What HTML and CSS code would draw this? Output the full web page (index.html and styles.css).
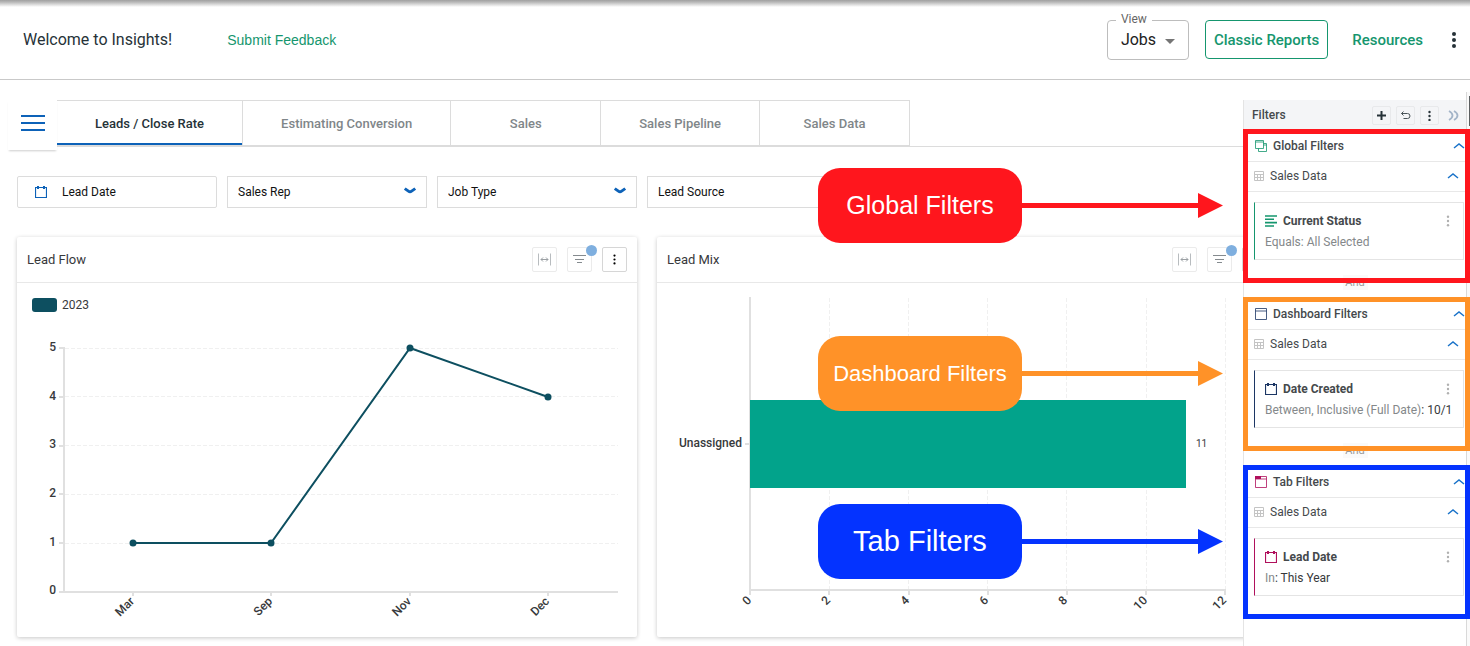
FILE: index.html
```html
<!DOCTYPE html>
<html lang="en">
    <head>
        <meta charset="UTF-8">
        <title>Insights</title>
        <link rel="stylesheet" href="styles.css">
    </head>
    <body>
        <!-- shared icons -->
        <svg class="sprite" aria-hidden="true">
            <symbol id="dots" viewBox="0 0 4 14">
                <circle cx="2" cy="2" r="1.4"/><circle cx="2" cy="7" r="1.4"/><circle cx="2" cy="12" r="1.4"/>
            </symbol>
            <symbol id="chevron" viewBox="0 0 12 8">
                <path d="M.8 1.500l3.600 2.700q1.600 1.200 3.200 0l3.600-2.700" fill="none" stroke="currentColor" stroke-width="2.800"/>
            </symbol>
            <symbol id="up" viewBox="0 0 12 8">
                <path d="M1 6l5-4 5 4" fill="none" stroke="currentColor" stroke-width="1.5"/>
            </symbol>
            <symbol id="calendar" viewBox="0 0 12 12">
                <path d="M.5 1.500h11v10H.5z" fill="none" stroke="currentColor" stroke-width="1.200"/>
                <path d="M2 0h2v3H2zM8 0h2v3H8z" fill="currentColor"/>
            </symbol>
            <symbol id="table" viewBox="0 0 10 10">
                <path d="M.5 .5h9v9h-9zM.5 3.500h9M.5 6.500h9M3.500 3.500v6M6.500 3.500v6" fill="none" stroke="currentColor"/>
            </symbol>
            <symbol id="resize" viewBox="0 0 13 13">
                <path d="M.5 .5v12M12.500 .5v12" stroke="#b8bcbf" fill="none"/>
                <path d="M3 6.500h7M5 4.500l-2 2 2 2M8 4.500l2 2-2 2" stroke="#9a9fa3" fill="none"/>
            </symbol>
            <symbol id="funnel" viewBox="0 0 13 13">
                <path d="M0 2.500h13M2 6.500h9M4 9.500h5" stroke="#858b8f" fill="none"/>
            </symbol>
        </svg>

        <header class="topbar">
            <h1 class="welcome">Welcome to Insights!</h1>
            <a class="feedback" href="#">Submit Feedback</a>
            <div class="view-field">
                <label for="view">View</label>
                <select id="view"><option>Jobs</option></select>
                <svg class="caret" viewBox="0 0 10 5"><path d="M0 0h10l-5 5z"/></svg>
            </div>
            <button class="btn-outline">Classic Reports</button>
            <a class="resources" href="#">Resources</a>
            <button class="more" aria-label="More"><svg viewBox="0 0 4 16"><circle cx="2" cy="2" r="2"/><circle cx="2" cy="8" r="2"/><circle cx="2" cy="14" r="2"/></svg></button>
        </header>

        <div class="layout">
            <main class="dashboard">
                <nav class="tabs">
                    <button class="menu" aria-label="Menu"><span></span><span></span><span></span></button>
                    <a class="tab selected" href="#">Leads / Close Rate</a>
                    <a class="tab" href="#">Estimating Conversion</a>
                    <a class="tab" href="#">Sales</a>
                    <a class="tab" href="#">Sales Pipeline</a>
                    <a class="tab" href="#">Sales Data</a>
                </nav>

                <div class="controls">
                    <button class="control date"><svg><use href="#calendar"/></svg>Lead Date</button>
                    <div class="control">
                        <select aria-label="Sales Rep"><option>Sales Rep</option></select>
                        <svg><use href="#chevron"/></svg>
                    </div>
                    <div class="control">
                        <select aria-label="Job Type"><option>Job Type</option></select>
                        <svg><use href="#chevron"/></svg>
                    </div>
                    <div class="control">
                        <select aria-label="Lead Source"><option>Lead Source</option></select>
                        <svg><use href="#chevron"/></svg>
                    </div>
                </div>

                <div class="cards">
                    <section class="card">
                        <div class="card-head">
                            <h2>Lead Flow</h2>
                            <button class="tool" aria-label="Resize"><svg><use href="#resize"/></svg></button>
                            <button class="tool" aria-label="Filter"><svg><use href="#funnel"/></svg><span class="badge"></span></button>
                            <button class="tool dark" aria-label="Options"><svg><use href="#dots"/></svg></button>
                        </div>
                        <svg class="chart" viewBox="0 0 620 354">
                            <rect x="15" y="15" width="25" height="14" rx="3" fill="#0d4f60"/>
                            <text x="45" y="26" class="legend">2023</text>
                            <g class="grid">
                                <path d="M48 65.500H601M48 113.500H601M48 162.500H601M48 211.500H601M48 260.500H601"/>
                            </g>
                            <g class="axis">
                                <path d="M47 64V309M42 309H601"/>
                                <path d="M42 65h5M42 114h5M42 163h5M42 211h5M42 260h5M116 309v4M254 309v4M393 309v4M531 309v4"/>
                            </g>
                            <g class="label" text-anchor="end">
                                <text x="39" y="68">5</text>
                                <text x="39" y="117">4</text>
                                <text x="39" y="165">3</text>
                                <text x="39" y="214">2</text>
                                <text x="39" y="263">1</text>
                                <text x="39" y="311">0</text>
                                <text transform="translate(118 319) rotate(-45)">Mar</text>
                                <text transform="translate(256 319) rotate(-45)">Sep</text>
                                <text transform="translate(395 319) rotate(-45)">Nov</text>
                                <text transform="translate(533 319) rotate(-45)">Dec</text>
                            </g>
                            <path d="M116 260L254 260L393 65L531 114" fill="none" stroke="#0d4f60" stroke-width="2"/>
                            <g fill="#0d4f60">
                                <circle cx="116" cy="260" r="3.500"/>
                                <circle cx="254" cy="260" r="3.500"/>
                                <circle cx="393" cy="65" r="3.500"/>
                                <circle cx="531" cy="114" r="3.500"/>
                            </g>
                        </svg>
                    </section>

                    <section class="card">
                        <div class="card-head">
                            <h2>Lead Mix</h2>
                            <button class="tool" aria-label="Resize"><svg><use href="#resize"/></svg></button>
                            <button class="tool" aria-label="Filter"><svg><use href="#funnel"/></svg><span class="badge"></span></button>
                            <button class="tool dark" aria-label="Options"><svg><use href="#dots"/></svg></button>
                        </div>
                        <svg class="chart" viewBox="0 0 620 354">
                            <g class="grid">
                                <path d="M172.500 15V307M251.500 15V307M330.500 15V307M409.500 15V307M489.500 15V307M568.500 15V307"/>
                            </g>
                            <g class="axis">
                                <path d="M93 14V312M92 307H569M88 161h5"/>
                                <path d="M172 307v5M252 307v5M331 307v5M410 307v5M489 307v5M568 307v5"/>
                            </g>
                            <rect x="93" y="117" width="436" height="88" fill="#02a38b"/>
                            <g class="label" text-anchor="end">
                                <text x="85" y="164">Unassigned</text>
                                <text transform="translate(95 318) rotate(-45)">0</text>
                                <text transform="translate(174 318) rotate(-45)">2</text>
                                <text transform="translate(253 318) rotate(-45)">4</text>
                                <text transform="translate(332 318) rotate(-45)">6</text>
                                <text transform="translate(411 318) rotate(-45)">8</text>
                                <text transform="translate(491 318) rotate(-45)">10</text>
                                <text transform="translate(570 318) rotate(-45)">12</text>
                            </g>
                            <text x="539" y="164" class="value">11</text>
                        </svg>
                    </section>
                </div>
            </main>

            <aside class="filters">
                <div class="panel">
                    <div class="panel-head">
                        <h2>Filters</h2>
                        <button aria-label="Add"><svg viewBox="0 0 11 11"><path d="M5.500 1v9M1 5.500h9" fill="none" stroke="#263238" stroke-width="2"/></svg></button>
                        <button aria-label="Undo"><svg viewBox="0 0 11 11"><path d="M3.500 1.500l-2 2 2 2M1.500 3.500h6q2.500 0 2.500 2.500t-2.500 2.500h-4" fill="none" stroke="#4a5459"/></svg></button>
                        <button aria-label="Options"><svg viewBox="0 0 11 11"><g fill="#263238"><circle cx="5.500" cy="2" r="1.200"/><circle cx="5.500" cy="6" r="1.200"/><circle cx="5.500" cy="10" r="1.200"/></g></svg></button>
                        <button class="collapse" aria-label="Collapse"><svg viewBox="0 0 11 11"><path d="M1 1q3.500 2 3.500 4.500T1 10M6 1q3.500 2 3.500 4.500T6 10" fill="none" stroke="#a3b4c8" stroke-width="1.800"/></svg></button>
                    </div>

                    <section class="group global">
                        <div class="group-title">
                            <svg class="kind" viewBox="0 0 12 12"><path d="M.5 .5h8v8h-8zM.5 2h8M8.500 3.500h3v8h-8v-3M8.500 5h3" fill="none" stroke="currentColor" stroke-opacity=".8"/></svg>
                            <h3>Global Filters</h3>
                            <svg class="up"><use href="#up"/></svg>
                        </div>
                        <div class="source"><svg class="table"><use href="#table"/></svg>Sales Data<svg class="up"><use href="#up"/></svg></div>
                        <div class="rule">
                            <div class="rule-title">
                                <svg class="kind" viewBox="0 0 12 12"><path d="M0 1h12M0 4.300h9M0 7.600h12M0 11h9" fill="none" stroke="currentColor" stroke-width="1.600"/></svg>
                                <h4>Current Status</h4>
                                <svg class="rule-dots"><use href="#dots"/></svg>
                            </div>
                            <p>Equals: All Selected</p>
                        </div>
                        <span class="and">And</span>
                        <div class="callout"><span>Global Filters</span><svg viewBox="0 0 201 25"><path d="M0 10h176V0l25 12.500L176 25V15H0z"/></svg></div>
                    </section>

                    <section class="group board">
                        <div class="group-title">
                            <svg class="kind" viewBox="0 0 12 12"><path d="M.5 .5h11v11H.5zM.5 3h11" fill="none" stroke="currentColor" stroke-opacity=".8"/></svg>
                            <h3>Dashboard Filters</h3>
                            <svg class="up"><use href="#up"/></svg>
                        </div>
                        <div class="source"><svg class="table"><use href="#table"/></svg>Sales Data<svg class="up"><use href="#up"/></svg></div>
                        <div class="rule">
                            <div class="rule-title">
                                <svg class="kind"><use href="#calendar"/></svg>
                                <h4>Date Created</h4>
                                <svg class="rule-dots"><use href="#dots"/></svg>
                            </div>
                            <p>Between, Inclusive (Full Date)<b>: 10/1</b></p>
                        </div>
                        <span class="and">And</span>
                        <div class="callout"><span>Dashboard Filters</span><svg viewBox="0 0 201 25"><path d="M0 10h176V0l25 12.500L176 25V15H0z"/></svg></div>
                    </section>

                    <section class="group tabbed">
                        <div class="group-title">
                            <svg class="kind" viewBox="0 0 12 12"><path d="M.5 .5h11v11H.5zM.5 3h11" fill="none" stroke="currentColor" stroke-opacity=".8"/><path d="M0 0h6v3H0z" fill="currentColor"/></svg>
                            <h3>Tab Filters</h3>
                            <svg class="up"><use href="#up"/></svg>
                        </div>
                        <div class="source"><svg class="table"><use href="#table"/></svg>Sales Data<svg class="up"><use href="#up"/></svg></div>
                        <div class="rule">
                            <div class="rule-title">
                                <svg class="kind"><use href="#calendar"/></svg>
                                <h4>Lead Date</h4>
                                <svg class="rule-dots"><use href="#dots"/></svg>
                            </div>
                            <p>In<b>: This Year</b></p>
                        </div>
                        <div class="callout"><span>Tab Filters</span><svg viewBox="0 0 201 25"><path d="M0 10h176V0l25 12.500L176 25V15H0z"/></svg></div>
                    </section>
                </div>
                <div class="scroll"></div>
            </aside>
        </div>
    </body>
</html>
```
FILE: styles.css
```css
*{
    margin:0;
    padding:0;
    box-sizing:border-box;
}
body{
    min-height:100vh;
    display:flex;
    flex-direction:column;
    font-family:Roboto, "Liberation Sans", sans-serif;
    font-size:12px;
    color:#263238;
    background-color:#fff;
}
a{
    text-decoration:none;
}
button,select{
    font:inherit;
    color:inherit;
    background:none;
    border:none;
    cursor:pointer;
}
select{
    appearance:none;
}
svg{
    display:block;
    flex:none;
}
.sprite{
    position:absolute;
    width:0;
    height:0;
}

/* top bar */
.topbar{
    height:80px;
    display:flex;
    align-items:center;
    padding:0 8px 0 23px;
    border-bottom:1px solid #c9c9c9;
    background:linear-gradient(#a0a0a0, #b8b8b8 30%, #fff) top / 100% 7px no-repeat;
}
.welcome{
    font-size:16px;
    font-weight:400;
}
.feedback{
    margin-left:55px;
    margin-right:auto;
    font-family:"Liberation Sans", Arial, sans-serif;
    font-size:14px;
    color:#15966e;
}
.view-field{
    position:relative;
    width:82px;
    height:40px;
    border:1px solid #bdbdbd;
    border-radius:4px;
}
.view-field label{
    position:absolute;
    top:-10px;
    left:8px;
    padding:0 5px;
    font-size:12px;
    line-height:16px;
    color:#666;
    background-color:#fff;
}
.view-field select{
    width:100%;
    height:100%;
    padding-left:13px;
    font-size:16px;
    color:#212121;
}
.caret{
    position:absolute;
    top:18px;
    right:13px;
    width:10px;
    height:5px;
    fill:#757575;
    pointer-events:none;
}
.btn-outline{
    height:39px;
    margin-left:16px;
    padding:0 8px;
    border:1px solid #15966e;
    border-radius:4px;
    font-size:15px;
    font-weight:500;
    color:#15966e;
}
.resources{
    margin-left:24px;
    font-size:15px;
    font-weight:500;
    color:#15966e;
}
.more{
    margin-left:23px;
    padding:0 6px;
}
.more svg{
    width:4px;
    height:16px;
    fill:#263238;
}

.layout{
    flex:1;
    display:flex;
}
.dashboard{
    flex:1;
    min-width:0;
    padding-top:20px;
    overflow:hidden;
}

/* tabs */
.tabs{
    display:flex;
    align-items:flex-start;
    height:47px;
    margin-left:8px;
    background:linear-gradient(#dcdcdc, #dcdcdc) bottom / 100% 1px no-repeat;
}
.menu{
    width:49px;
    height:50px;
    display:flex;
    flex-direction:column;
    align-items:center;
    gap:5px;
    padding-top:15px;
    background-color:#fff;
    box-shadow:0 2px 2px -1px rgba(0,0,0,.2);
}
.menu span{
    width:24px;
    height:2px;
    background-color:#0d62b8;
}
.tab{
    min-width:150px;
    height:46px;
    padding:0 38px;
    border:1px solid #dcdcdc;
    border-left:none;
    text-align:center;
    font-size:13px;
    font-weight:500;
    line-height:46px;
    color:#7f8689;
}
.tab.selected{
    color:#263238;
    box-shadow:inset 0 -2px #0d62b8;
}

/* quick filters */
.controls{
    display:flex;
    gap:10px;
    padding:29px 17px;
}
.control{
    position:relative;
    flex:none;
    width:200px;
    height:32px;
    border:1px solid #dcdcdc;
    color:#111;
}
.control select{
    width:100%;
    height:100%;
    padding-left:10px;
}
.control svg{
    position:absolute;
    top:10px;
    right:10px;
    width:12px;
    height:8px;
    color:#0d62b8;
    pointer-events:none;
}
.date{
    display:flex;
    align-items:center;
    gap:15px;
    padding-left:17px;
    border-radius:2px;
}
.date svg{
    position:static;
    width:12px;
    height:12px;
}

/* cards */
.cards{
    display:grid;
    grid-template-columns:repeat(2, minmax(620px, 1fr));
    gap:20px;
    padding:0 17px 9px;
}
.card{
    border-radius:2px;
    box-shadow:0 1px 4px rgba(0,0,0,.22);
}
.card-head{
    height:46px;
    display:flex;
    align-items:center;
    gap:10px;
    padding:0 10px;
    border-bottom:1px solid #e8e8e8;
}
.card-head h2{
    margin-right:auto;
    font-size:13px;
    font-weight:400;
    color:#37393b;
}
.tool{
    position:relative;
    width:25px;
    height:25px;
    display:flex;
    align-items:center;
    justify-content:center;
    border:1px solid #ebebeb;
    border-radius:2px;
}
.tool svg{
    width:13px;
    height:13px;
}
.tool.dark{
    border-color:#d6d6d6;
}
.tool.dark svg{
    height:11px;
}
.badge{
    position:absolute;
    top:-3px;
    right:-6px;
    width:11px;
    height:11px;
    border-radius:50%;
    background-color:#7fafdf;
}
.chart{
    width:100%;
}
.chart text{
    font-size:12px;
    fill:#37393b;
}
.chart .label text{
    font-weight:500;
}
.chart .value{
    font-size:10px;
}
.grid path{
    stroke:#f0f0f0;
    stroke-dasharray:4 2;
}
.axis path{
    fill:none;
    stroke:#e0e0e0;
    stroke-width:2;
}

/* filters panel */
.filters{
    width:227px;
    display:flex;
}
.panel{
    flex:1;
    min-width:0;
    margin-top:20px;
    border-left:1px solid #e4e4e4;
}
.scroll{
    width:4px;
    margin-top:12px;
    border-left:1px solid #d9d9d9;
    background:linear-gradient(#5c5f61, #5c5f61) right 4px / 1px 30px no-repeat #fafafa;
}
.panel-head{
    height:31px;
    display:flex;
    align-items:center;
    gap:5px;
    padding:0 3px 1px 8px;
    background-color:#f4f5f7;
}
.panel-head h2{
    margin-right:auto;
    font-size:12px;
    font-weight:500;
    color:#45494c;
}
.panel-head button{
    width:19px;
    height:19px;
    display:flex;
    align-items:center;
    justify-content:center;
    border:1px solid #e8e9eb;
    border-radius:2px;
}
.panel-head .collapse{
    border:none;
}
.panel-head svg{
    width:11px;
    height:11px;
}
.group{
    position:relative;
    height:168px;
    background-color:#fff;
}
.group::after{
    content:"";
    position:absolute;
    top:-2px;
    left:-1px;
    right:-4px;
    bottom:16px;
    border:5px solid;
    pointer-events:none;
}
.group-title,.source{
    display:flex;
    align-items:center;
    border-bottom:1px solid #e8e8e8;
    color:#45494c;
}
.group-title{
    height:31px;
    gap:6px;
    padding:0 1px 0 11px;
}
.source{
    height:30px;
    gap:6px;
    padding:0 7px 2px 10px;
}
.group h3,.group h4{
    font-size:12px;
    font-weight:500;
}
.group h4{
    font-weight:700;
}
.kind{
    width:12px;
    height:12px;
}
.table{
    width:10px;
    height:10px;
    color:#c4c4c4;
}
.up{
    width:12px;
    height:8px;
    margin-left:auto;
    color:#1a73c9;
}
.rule{
    height:58px;
    margin:10px 2px 0 10px;
    padding:10px;
    border:1px solid #e4e4e4;
    border-left-color:currentColor;
}
.rule-title{
    display:flex;
    align-items:center;
    gap:6px;
    line-height:16px;
}
.rule h4{
    color:#45494c;
}
.rule-dots{
    width:4px;
    height:12px;
    margin-left:auto;
    margin-right:3px;
    fill:#b0b0b0;
}
.rule p{
    margin-top:4px;
    line-height:18px;
    white-space:nowrap;
    color:#84888a;
}
.rule b{
    font-weight:400;
    color:#37393b;
}
.and{
    display:block;
    width:25px;
    margin:15px auto 0;
    background-color:#fafafa;
    text-align:center;
    font-size:11px;
    line-height:15px;
    color:#999;
}
.global .kind,.global .rule{
    color:#15966e;
}
.board .kind,.board .rule{
    color:#1c3664;
}
.tabbed .kind,.tabbed .rule{
    color:#b0105c;
}
.global::after{
    border-color:#ff161d;
}
.board::after{
    border-color:#ff9228;
}
.tabbed::after{
    border-color:#0433ff;
}

/* callouts pointing at each group */
.callout{
    position:absolute;
    top:37px;
    right:calc(100% + 21px);
    z-index:1;
    display:flex;
    align-items:center;
}
.callout span{
    width:204px;
    border-radius:22px;
    text-align:center;
    font-family:"Liberation Sans", Arial, sans-serif;
    line-height:75px;
    color:#fff;
}
.callout svg{
    width:201px;
    height:25px;
}
.global .callout{
    font-size:25px;
    fill:#ff161d;
}
.global .callout span{
    background-color:#ff161d;
}
.board .callout{
    font-size:22px;
    fill:#ff9228;
}
.board .callout span{
    background-color:#ff9228;
}
.tabbed .callout{
    font-size:29px;
    fill:#0433ff;
}
.tabbed .callout span{
    background-color:#0433ff;
}
```
